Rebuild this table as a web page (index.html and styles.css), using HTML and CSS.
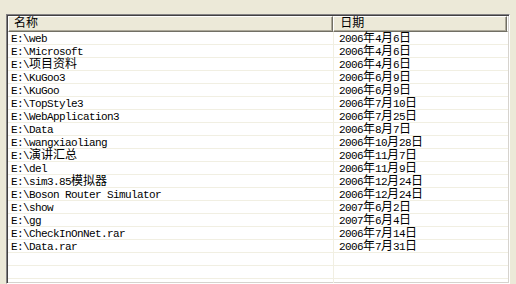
FILE: index.html
```html
<!DOCTYPE html>
<html>
<head>
<meta charset="utf-8">
<link rel="stylesheet" href="styles.css">
</head>
<body>
<div class="list">
  <div class="head">
    <div class="hcell name"><span class="c">名称</span></div>
    <div class="hcell date"><span class="c">日期</span></div>
    <div class="hcell rest"></div>
  </div>
  <div class="rows">
    <div class="row"><div class="cell name">E:\web</div><div class="cell date">2006<span class="c">年</span>4<span class="c">月</span>6<span class="c">日</span></div></div>
    <div class="row"><div class="cell name">E:\Microsoft</div><div class="cell date">2006<span class="c">年</span>4<span class="c">月</span>6<span class="c">日</span></div></div>
    <div class="row"><div class="cell name">E:\<span class="c">项目资料</span></div><div class="cell date">2006<span class="c">年</span>4<span class="c">月</span>6<span class="c">日</span></div></div>
    <div class="row"><div class="cell name">E:\KuGoo3</div><div class="cell date">2006<span class="c">年</span>6<span class="c">月</span>9<span class="c">日</span></div></div>
    <div class="row"><div class="cell name">E:\KuGoo</div><div class="cell date">2006<span class="c">年</span>6<span class="c">月</span>9<span class="c">日</span></div></div>
    <div class="row"><div class="cell name">E:\TopStyle3</div><div class="cell date">2006<span class="c">年</span>7<span class="c">月</span>10<span class="c">日</span></div></div>
    <div class="row"><div class="cell name">E:\WebApplication3</div><div class="cell date">2006<span class="c">年</span>7<span class="c">月</span>25<span class="c">日</span></div></div>
    <div class="row"><div class="cell name">E:\Data</div><div class="cell date">2006<span class="c">年</span>8<span class="c">月</span>7<span class="c">日</span></div></div>
    <div class="row"><div class="cell name">E:\wangxiaoliang</div><div class="cell date">2006<span class="c">年</span>10<span class="c">月</span>28<span class="c">日</span></div></div>
    <div class="row"><div class="cell name">E:\<span class="c">演讲汇总</span></div><div class="cell date">2006<span class="c">年</span>11<span class="c">月</span>7<span class="c">日</span></div></div>
    <div class="row"><div class="cell name">E:\del</div><div class="cell date">2006<span class="c">年</span>11<span class="c">月</span>9<span class="c">日</span></div></div>
    <div class="row"><div class="cell name">E:\sim3.85<span class="c">模拟器</span></div><div class="cell date">2006<span class="c">年</span>12<span class="c">月</span>24<span class="c">日</span></div></div>
    <div class="row"><div class="cell name">E:\Boson Router Simulator</div><div class="cell date">2006<span class="c">年</span>12<span class="c">月</span>24<span class="c">日</span></div></div>
    <div class="row"><div class="cell name">E:\show</div><div class="cell date">2007<span class="c">年</span>6<span class="c">月</span>2<span class="c">日</span></div></div>
    <div class="row"><div class="cell name">E:\gg</div><div class="cell date">2007<span class="c">年</span>6<span class="c">月</span>4<span class="c">日</span></div></div>
    <div class="row"><div class="cell name">E:\CheckInOnNet.rar</div><div class="cell date">2006<span class="c">年</span>7<span class="c">月</span>14<span class="c">日</span></div></div>
    <div class="row"><div class="cell name">E:\Data.rar</div><div class="cell date">2006<span class="c">年</span>7<span class="c">月</span>31<span class="c">日</span></div></div>
    <div class="row"><div class="cell name"></div><div class="cell date"></div></div>
    <div class="row"><div class="cell name"></div><div class="cell date"></div></div>
    <div class="row"><div class="cell name"></div><div class="cell date"></div></div>
  </div>
</div>
</body>
</html>
```

FILE: styles.css
```css
html, body {
  margin: 0;
  padding: 0;
  background: #ece9d8;
  overflow: hidden;
}
body {
  padding: 14px 0 0 6px;
  height: 284px;
  box-sizing: border-box;
}
.list {
  width: 504px;
  height: 270px;
  box-sizing: border-box;
  background: #fff;
  border-style: solid;
  border-width: 1px;
  border-color: #848284 #ffffff #ffffff #848284;
  box-shadow: inset 1px 1px 0 #424142, inset -1px -1px 0 #d6d3ce;
  padding: 1px;
  font-family: "Liberation Mono", monospace;
  font-size: 11px;
  letter-spacing: -0.6px;
  color: #000;
  overflow: hidden;
}
.c {
  font-family: "Noto Sans CJK SC", sans-serif;
  font-size: 12px;
  line-height: 0;
  letter-spacing: 0;
}
.head {
  display: flex;
  height: 16px;
}
.hcell {
  box-sizing: border-box;
  background: #ece9d8;
  height: 16px;
  border-top: 1px solid #fff;
  border-left: 1px solid #fff;
  border-right: 1px solid #716f64;
  border-bottom: 1px solid #716f64;
  box-shadow: inset -1px -1px 0 #aca899;
  line-height: 12px;
  padding-top: 1px;
  white-space: pre;
}
.hcell.name {
  width: 326px;
  padding-left: 5px;
}
.hcell.date {
  width: 174px;
  padding-left: 6px;
}
.hcell.rest {
  flex: 1;
  border-right: none;
}
.row {
  display: flex;
  height: 13px;
  border-bottom: 1px solid #f1efe2;
  box-sizing: border-box;
}
.cell {
  box-sizing: border-box;
  height: 12px;
  line-height: 12px;
  padding-top: 1px;
  white-space: pre;
}
.cell.name {
  width: 326px;
  padding-left: 3px;
  border-right: 1px solid #f1efe2;
}
.cell.date {
  width: 174px;
  padding-left: 5px;
}
```
